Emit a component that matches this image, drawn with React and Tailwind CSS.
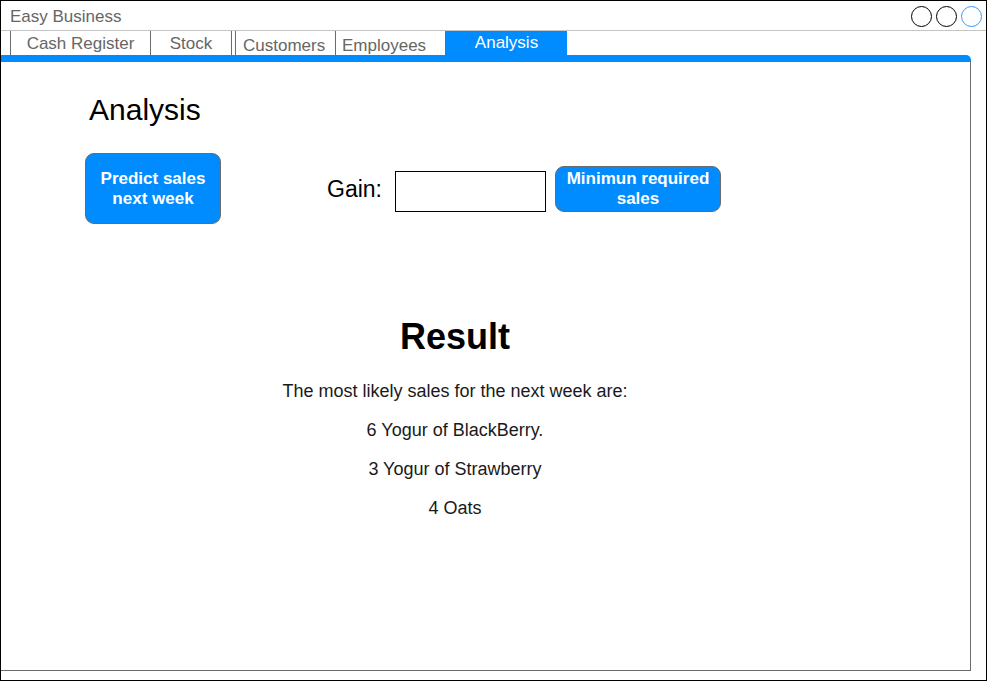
import React from 'react'

// tabs of the window, the active one is drawn blue
const tabs = [
  { label: 'Cash Register', w: 'w-[141px]', border: 'border-l border-r', pt: 'pt-[4px]', align: 'text-center' },
  { label: 'Stock', w: 'w-[81px]', border: 'border-r', pt: 'pt-[4px]', align: 'text-center' },
  { label: 'Customers', w: 'w-[101px]', border: 'border-l border-r ml-[3px]', pt: 'pt-[6px]', align: 'text-left pl-[7px]' },
  { label: 'Employees', w: 'w-[110px]', border: 'border-r', pt: 'pt-[6px]', align: 'text-left pl-[6px]' },
]

const lines = [
  'The most likely sales for the next week are:',
  '6 Yogur of BlackBerry.',
  '3 Yogur of Strawberry',
  '4 Oats',
]

function BlueButton({ children, className }) {
  return (
    <button className={`bg-[#008cff] border border-[#6b6b6b] rounded-[9px] text-white font-bold text-[17px] leading-[20px] ${className}`}>
      {children}
    </button>
  )
}

export default function App() {
  return (
    <div
      className="w-[987px] h-[681px] border border-black bg-white flex flex-col"
      style={{ fontFamily: '"Liberation Sans", Arial, sans-serif' }}
    >
      {/* title bar */}
      <div className="h-[30px] flex items-center justify-between border-b border-[#c4c4c4] pl-[9px] pr-[4px] shrink-0">
        <span className="text-[17px] text-[#666] leading-none pt-[2px]">Easy Business</span>
        <div className="flex gap-[4px] pt-[1px]">
          <span className="w-[21px] h-[21px] rounded-full border-[1.5px] border-black" />
          <span className="w-[21px] h-[21px] rounded-full border-[1.5px] border-black" />
          <span className="w-[21px] h-[21px] rounded-full border-[1.5px] border-[#3399ff]" />
        </div>
      </div>

      {/* tabs */}
      <div className="h-[24px] flex pl-[9px] shrink-0">
        {tabs.map((t) => (
          <div
            key={t.label}
            className={`${t.w} ${t.border} ${t.pt} ${t.align} border-[#6b6b6b] text-[17px] leading-[18px] text-[#666]`}
          >
            {t.label}
          </div>
        ))}
        <div className="w-[121px] bg-[#008cff] text-white text-center text-[17px] leading-[18px] pt-[3px]">
          Analysis
        </div>
      </div>

      {/* panel */}
      <div className="w-[970px] h-[616px] flex flex-col shrink-0">
        <div className="h-[7px] bg-[#008cff] rounded-tr-[5px] shrink-0" />
        <div className="flex-1 border-r border-b border-[#6b6b6b] flex flex-col">
          <h1 className="text-[30px] leading-[32px] text-black pl-[88px] mt-[32px]">Analysis</h1>

          <div className="flex items-center mt-[27px] pl-[84px]">
            <BlueButton className="w-[136px] h-[71px]">
              Predict sales<br />next week
            </BlueButton>
            <span className="text-[23px] leading-none text-black ml-[106px] mt-[1px]">Gain:</span>
            <div className="w-[151px] h-[41px] border border-black ml-[13px] mt-[5px]" />
            <BlueButton className="w-[166px] h-[46px] ml-[9px]">
              Minimun required<br />sales
            </BlueButton>
          </div>

          <div className="w-[908px] text-center mt-[93px]">
            <h2 className="text-[36px] leading-[40px] font-bold text-black">Result</h2>
            <div className="mt-[15px] text-[18px] leading-[39px] text-[#1a1a1a]">
              {lines.map((l) => (
                <p key={l}>{l}</p>
              ))}
            </div>
          </div>
        </div>
      </div>
    </div>
  )
}
